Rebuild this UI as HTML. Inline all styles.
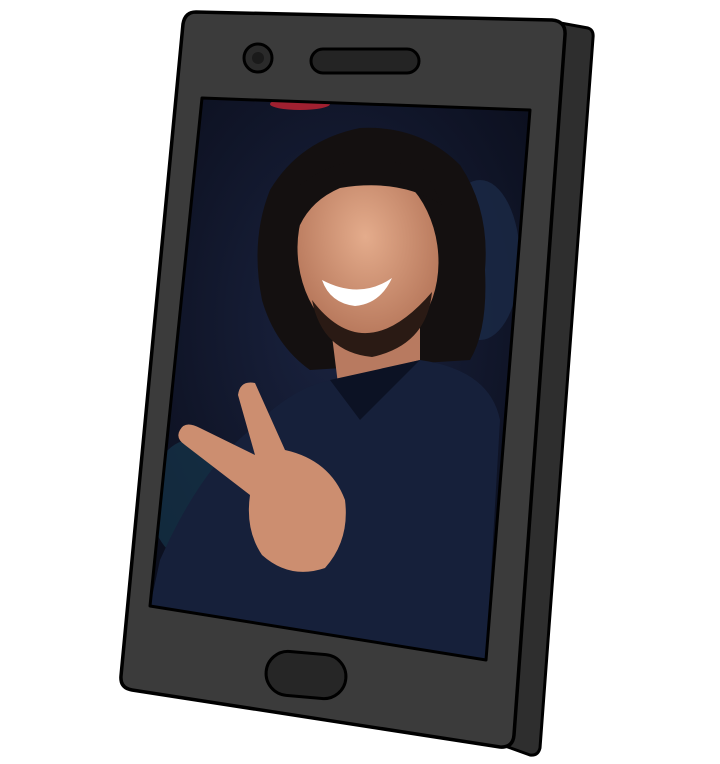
<!DOCTYPE html>
<html><head><meta charset="utf-8"><style>
html,body{margin:0;padding:0;background:#fff;width:720px;height:764px;overflow:hidden}
</style></head><body>
<svg width="720" height="764" viewBox="0 0 720 764" xmlns="http://www.w3.org/2000/svg">
<defs>
<clipPath id="scr"><path d="M202 98 L530 110 L486 660 L150 606 Z"/></clipPath>
<radialGradient id="bg" cx="0.5" cy="0.4" r="0.7">
<stop offset="0" stop-color="#1a2340"/><stop offset="0.6" stop-color="#101528"/><stop offset="1" stop-color="#0a0d1a"/></radialGradient>
<radialGradient id="skin" cx="0.5" cy="0.4" r="0.6">
<stop offset="0" stop-color="#e4ac8c"/><stop offset="1" stop-color="#b47458"/></radialGradient>
</defs>
<path d="M555 22 L588 28 Q594 30 593 38 L540 748 Q538 756 530 755 L505 746 Z" fill="#2e2e2e" stroke="#000" stroke-width="3" stroke-linejoin="round"/>
<path d="M196 12 L552 20 Q566 21 565 35 L514 735 Q513 748 500 747 L132 690 Q120 688 121 676 L183 24 Q185 12 196 12 Z" fill="#3b3b3b" stroke="#000" stroke-width="3.5" stroke-linejoin="round"/>
<circle cx="258" cy="58" r="14" fill="#2a2a2a" stroke="#000" stroke-width="3"/>
<circle cx="258" cy="58" r="6" fill="#1a1a1a"/>
<rect x="311" y="49" width="108" height="24" rx="12" fill="#242424" stroke="#000" stroke-width="3"/>
<g clip-path="url(#scr)">
<rect x="140" y="90" width="400" height="580" fill="url(#bg)"/>
<ellipse cx="300" cy="104" rx="30" ry="6" fill="#a02030"/>
<ellipse cx="480" cy="260" rx="40" ry="80" fill="#1e3050" opacity="0.6"/>
<ellipse cx="190" cy="500" rx="40" ry="60" fill="#16354a" opacity="0.7"/>
<path d="M262 300 Q250 240 270 190 Q300 140 360 128 Q420 125 460 165 Q490 210 485 270 Q488 330 470 360 L310 370 Q275 345 262 300 Z" fill="#141010"/>
<path d="M330 320 L420 310 L420 390 L340 400 Z" fill="#b87a60"/>
<ellipse cx="368" cy="255" rx="70" ry="92" fill="url(#skin)" transform="rotate(-8 368 255)"/>
<path d="M300 185 Q350 145 425 170 Q435 190 442 205 Q400 178 340 188 Q312 200 300 225 Z" fill="#141010"/>
<path d="M312 300 Q365 370 432 292 Q427 345 372 357 Q322 352 312 300 Z" fill="#2a1a14"/>
<path d="M322 280 Q360 300 392 278 Q380 304 355 306 Q330 303 322 280 Z" fill="#fff"/>
<path d="M250 430 Q300 380 340 380 L420 360 Q490 370 500 420 L486 660 L150 606 L160 560 Q200 470 250 430 Z" fill="#16203a"/>
<path d="M330 380 L360 420 L420 360 Z" fill="#0c1224"/>
<path d="M180 430 Q185 420 200 428 L255 455 L238 395 Q240 380 255 383 L285 450 Q330 460 345 500 Q350 540 325 568 Q290 580 262 555 Q245 530 250 495 L185 445 Q175 438 180 430 Z" fill="#cc8e70"/>
</g>
<path d="M202 98 L530 110 L486 660 L150 606 Z" fill="none" stroke="#000" stroke-width="3" stroke-linejoin="round"/>
<rect x="266" y="653" width="80" height="44" rx="22" fill="#262626" stroke="#000" stroke-width="3" transform="rotate(5 306 675)"/>
</svg>
</body></html>
